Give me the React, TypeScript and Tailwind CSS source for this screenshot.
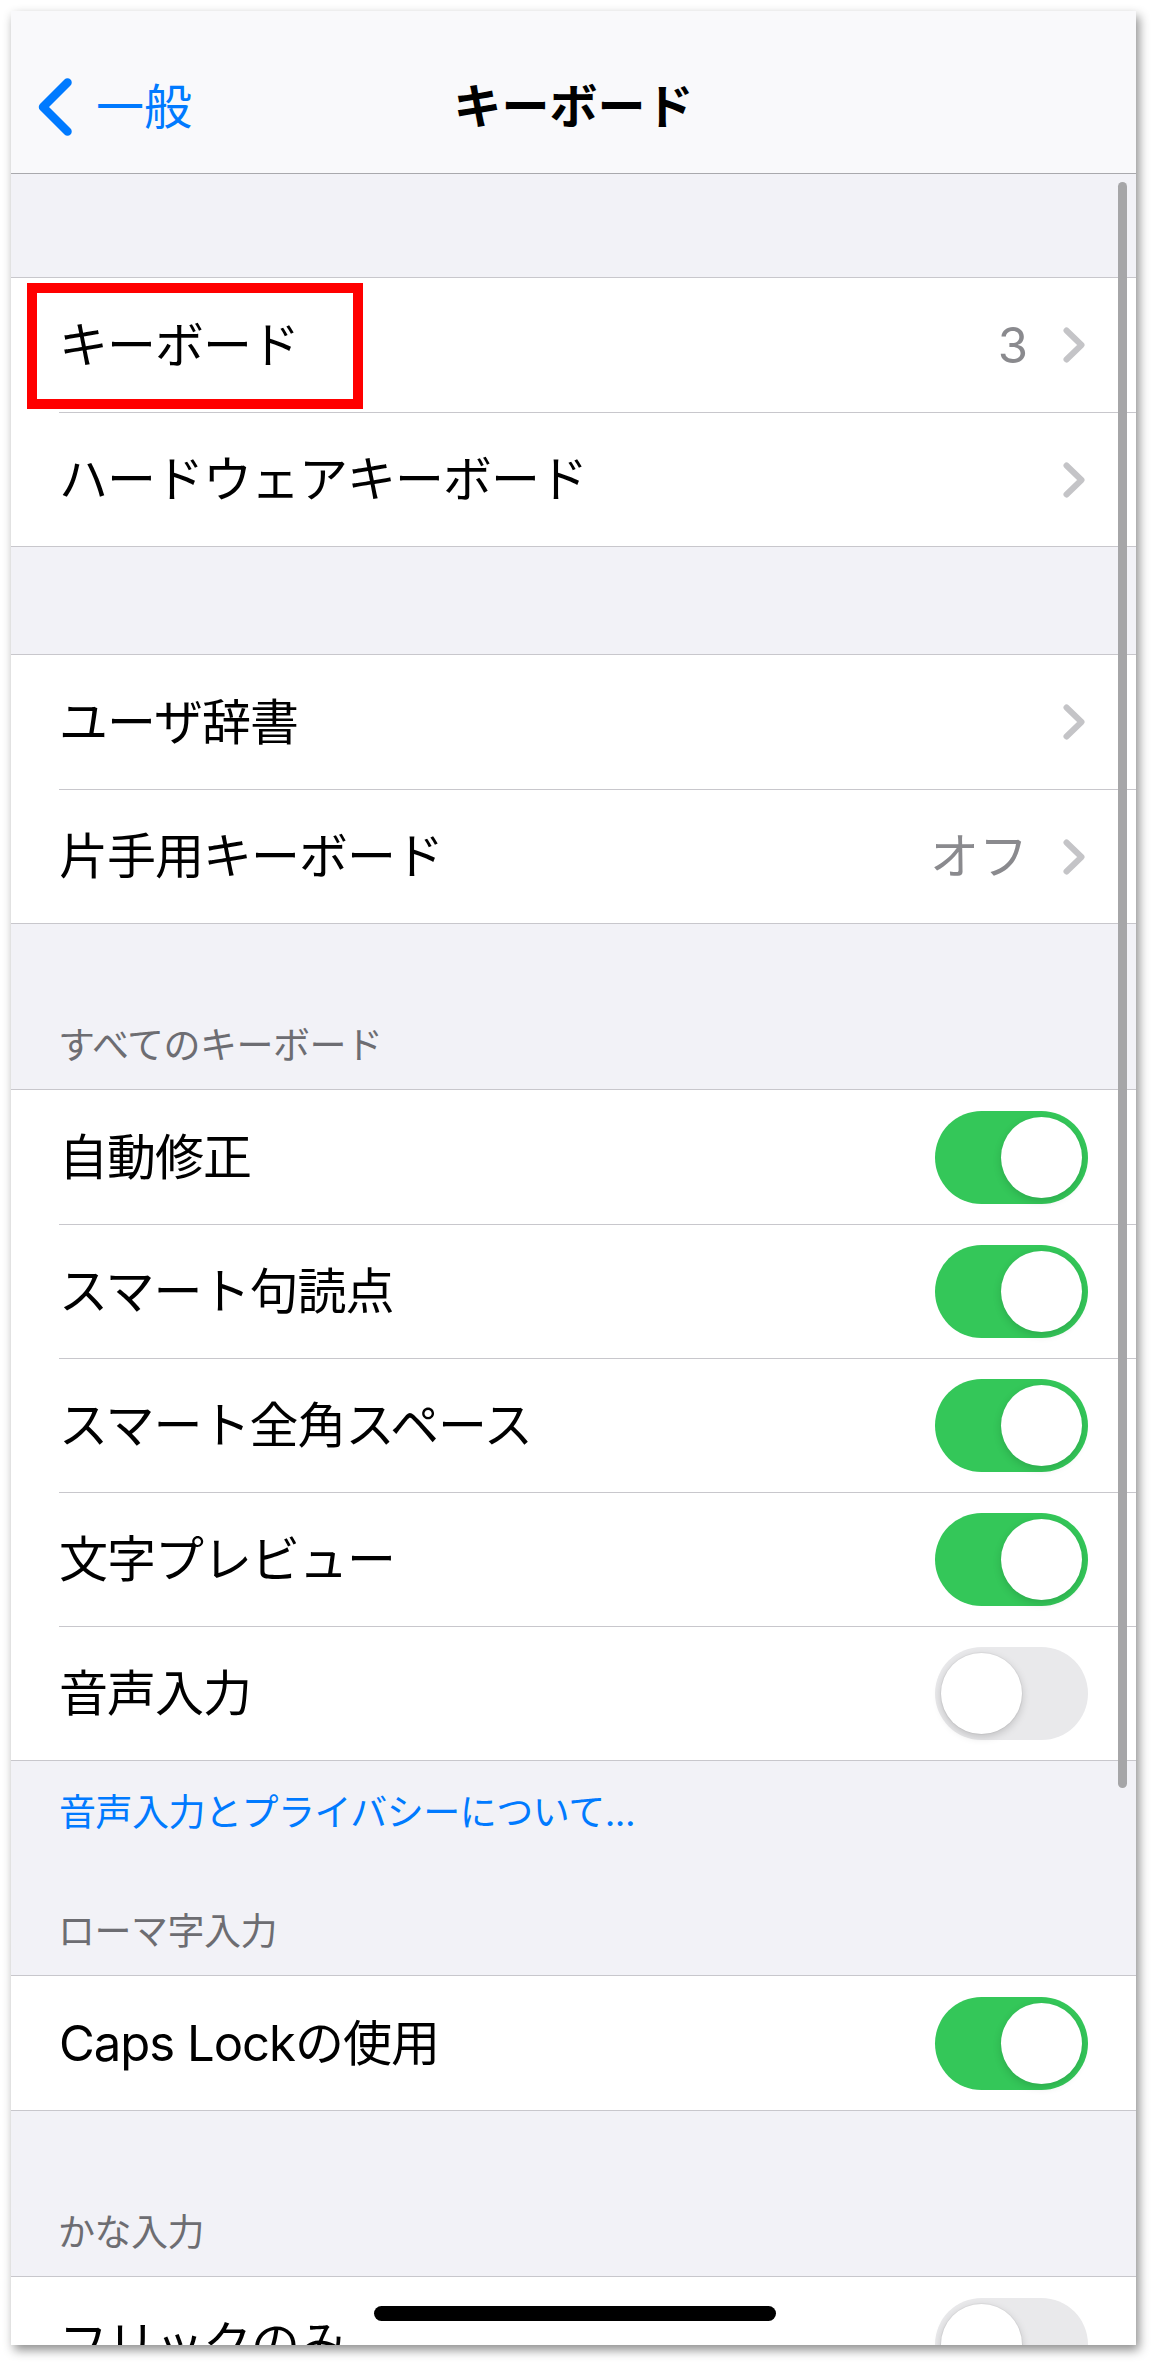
import React from "react";

const FONT = { fontFamily: 'Inter, "Noto Sans CJK JP", "Noto Sans", sans-serif' };

const Chevron = () => (
    <svg width="22" height="36" viewBox="0 0 22 36" fill="none" stroke="#c4c4c7" strokeWidth="6" strokeLinecap="round" strokeLinejoin="round">
        <path d="M3.5 3.5 L18.5 18 L3.5 32.5" />
    </svg>
);

const Toggle = ({ on }: { on: boolean }) =>
    on ? (
        <div className="w-[153px] h-[93px] rounded-full bg-[#34c759] flex items-center justify-end pr-[6px] shrink-0">
            <div className="w-[81px] h-[81px] rounded-full bg-white shadow-[0_3px_8px_rgba(0,0,0,0.15)]" />
        </div>
    ) : (
        <div className="w-[153px] h-[93px] rounded-full bg-[#e9e9eb] flex items-center justify-start pl-[6px] shrink-0">
            <div className="w-[81px] h-[81px] rounded-full bg-white shadow-[0_3px_8px_rgba(0,0,0,0.18),0_0_0_1px_rgba(0,0,0,0.04)]" />
        </div>
    );

type RowProps = {
    label: string;
    value?: string;
    chevron?: boolean;
    toggle?: boolean;
    first?: boolean;
    marked?: boolean;
};

const Row = ({ label, value, chevron, toggle, first, marked }: RowProps) => (
    <div className="relative h-[134px] pl-[48px] bg-white">
        <div className={`h-full flex items-center ${first ? "" : "border-t border-[#c8c7cc]"} ${toggle !== undefined ? "pr-[48px]" : "pr-[51px]"}`}>
            <span className="flex-1 text-[49px] leading-none text-black tracking-[-1px]">{label}</span>
            {value && <span className="text-[49px] leading-none text-[#8a8a8e] mr-[35px]">{value}</span>}
            {chevron && <Chevron />}
            {toggle !== undefined && <Toggle on={toggle} />}
        </div>
        {marked && (
            <div className="absolute left-[16px] top-[5px] w-[336px] h-[126px] border-[10px] border-[#ff0000]" />
        )}
    </div>
);

const Group = ({ children }: { children: React.ReactNode }) => (
    <div className="border-y border-[#c8c7cc] bg-white">{children}</div>
);

const Header = ({ text }: { text: string }) => (
    <div className="text-[37px] leading-[48px] text-[#6d6d72] pl-[47px] tracking-[-0.5px]">{text}</div>
);

export default function App() {
    return (
        <div className="w-[1155px] h-[2364px] bg-white pt-[11px] pl-[11px]" style={FONT}>
            <div className="relative w-[1125px] h-[2334px] overflow-hidden bg-[#f2f2f7] shadow-[3px_5px_10px_rgba(0,0,0,0.45)]">
                {/* Nav bar */}
                <div className="h-[163px] pt-[30px] bg-[#f9f9fb] border-b border-[#a9a9ad] grid grid-cols-[1fr_auto_1fr] items-center">
                    <div className="flex items-center pl-[27px] gap-[24px] text-[#007aff]">
                        <svg width="34" height="58" viewBox="0 0 34 58" fill="none" stroke="#007aff" strokeWidth="8.5" strokeLinecap="round" strokeLinejoin="round">
                            <path d="M29.5 4.5 L5 29 L29.5 53.5" />
                        </svg>
                        <span className="text-[48px] leading-none">一般</span>
                    </div>
                    <div className="text-[48px] leading-none font-bold text-black">キーボード</div>
                    <div />
                </div>

                <div className="h-[103px]" />
                <Group>
                    <Row label="キーボード" value="3" chevron first marked />
                    <Row label="ハードウェアキーボード" chevron />
                </Group>

                <div className="h-[107px]" />
                <Group>
                    <Row label="ユーザ辞書" chevron first />
                    <Row label="片手用キーボード" value="オフ" chevron />
                </Group>

                <div className="h-[165px] flex flex-col justify-end pb-[19px]">
                    <Header text="すべてのキーボード" />
                </div>
                <Group>
                    <Row label="自動修正" toggle first />
                    <Row label="スマート句読点" toggle />
                    <Row label="スマート全角スペース" toggle />
                    <Row label="文字プレビュー" toggle />
                    <Row label="音声入力" toggle={false} />
                </Group>

                <div className="h-[214px] flex flex-col pt-[28px] pb-[19px]">
                    <div className="text-[37px] leading-[48px] text-[#007aff] pl-[48px] tracking-[-0.5px]">音声入力とプライバシーについて...</div>
                    <div className="flex-1" />
                    <Header text="ローマ字入力" />
                </div>
                <Group>
                    <Row label="Caps Lockの使用" toggle first />
                </Group>

                <div className="h-[165px] flex flex-col justify-end pb-[19px]">
                    <Header text="かな入力" />
                </div>
                <Group>
                    <Row label="フリックのみ" toggle={false} first />
                </Group>

                {/* scroll indicator */}
                <div className="absolute left-[1107px] top-[171px] w-[9px] h-[1606px] rounded-full bg-[#a6a6a8]" />
                {/* home indicator */}
                <div className="absolute left-[363px] top-[2295px] w-[402px] h-[15px] rounded-full bg-black" />
            </div>
        </div>
    );
}
